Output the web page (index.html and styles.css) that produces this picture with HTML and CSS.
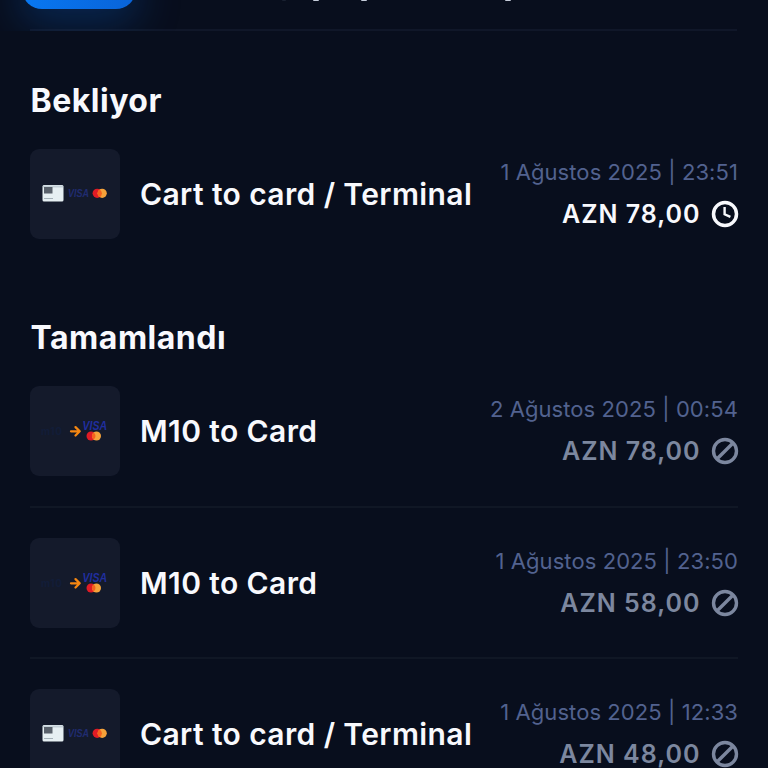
FILE: index.html
```
<!DOCTYPE html>
<html lang="tr">
<head>
<meta charset="utf-8">
<title>İşlemler</title>
<link rel="stylesheet" href="styles.css">
</head>
<body>
<svg width="0" height="0" class="defs" aria-hidden="true">
  <defs>
    <symbol id="terminal" viewBox="0 0 90 90">
      <rect x="12.5" y="36" width="21" height="16.5" rx="1.5" fill="#e6eff2"/>
      <path d="M13 36.5h20v2H13z" fill="#c3d0d7"/>
      <rect x="14" y="38" width="8.5" height="6.5" fill="#59616b"/>
      <path d="M14 49.5h9" stroke="#a4b1b8" stroke-width="1"/>
      <text x="38" y="48" class="visa visa-dim" textLength="21" lengthAdjust="spacingAndGlyphs" font-size="10.5">VISA</text>
      <circle cx="67.2" cy="44.3" r="4.6" fill="#e01b25"/><circle cx="72.2" cy="44.3" r="4.6" fill="#f6a23a"/>
      <path d="M69.7 40.4a4.6 4.6 0 0 1 0 7.8a4.6 4.6 0 0 1 0-7.8z" fill="#f6611e"/>
    </symbol>
    <symbol id="transfer" viewBox="0 0 90 90">
      <text x="11" y="49" class="m10" textLength="21" font-size="10">m10</text>
      <path d="M41 45.3h8M45.5 41.1l4.2 4.2-4.2 4.2" fill="none" stroke="#f58712" stroke-width="2.3" stroke-linecap="round" stroke-linejoin="round"/>
      <text x="52.5" y="44.2" class="visa" textLength="24.5" lengthAdjust="spacingAndGlyphs" font-size="12">VISA</text>
      <circle cx="61" cy="50" r="4.5" fill="#e01b25"/><circle cx="66.5" cy="50" r="4.5" fill="#f6a23a"/>
      <path d="M63.7 46.4a4.5 4.5 0 0 1 0 7.2a4.5 4.5 0 0 1 0-7.2z" fill="#f6611e"/>
    </symbol>
    <symbol id="clock" viewBox="0 0 28 28">
      <circle cx="14" cy="14" r="11.5" fill="none" stroke="currentColor" stroke-width="3.5"/>
      <path d="M13.6 7v7.3l5.8 2.6" fill="none" stroke="currentColor" stroke-width="2.4"/>
    </symbol>
    <symbol id="cancel" viewBox="0 0 28 28">
      <circle cx="14" cy="14" r="11.5" fill="none" stroke="currentColor" stroke-width="3.4"/>
      <path d="M6.2 21.8L21.8 6.2" stroke="currentColor" stroke-width="3.4"/>
    </symbol>
  </defs>
</svg>
<header class="top">
  <div class="pill"></div>
  <i class="tail tail-a"></i><i class="tail tail-b"></i><i class="tail tail-c"></i><i class="tail tail-d"></i>
</header>
<main>
  <section class="pending">
    <h2>Bekliyor</h2>
    <article class="row">
      <svg class="tile"><use href="#terminal"/></svg>
      <h3>Cart to card / Terminal</h3>
      <div class="info"><time>1 Ağustos 2025 | 23:51</time><div class="amount"><span>AZN 78,00</span><svg class="status"><use href="#clock"/></svg></div></div>
    </article>
  </section>
  <section class="done">
    <h2>Tamamlandı</h2>
    <article class="row">
      <svg class="tile"><use href="#transfer"/></svg>
      <h3>M10 to Card</h3>
      <div class="info"><time>2 Ağustos 2025 | 00:54</time><div class="amount"><span>AZN 78,00</span><svg class="status"><use href="#cancel"/></svg></div></div>
    </article>
    <article class="row">
      <svg class="tile"><use href="#transfer"/></svg>
      <h3>M10 to Card</h3>
      <div class="info"><time>1 Ağustos 2025 | 23:50</time><div class="amount"><span>AZN 58,00</span><svg class="status"><use href="#cancel"/></svg></div></div>
    </article>
    <article class="row">
      <svg class="tile"><use href="#terminal"/></svg>
      <h3>Cart to card / Terminal</h3>
      <div class="info"><time>1 Ağustos 2025 | 12:33</time><div class="amount"><span>AZN 48,00</span><svg class="status"><use href="#cancel"/></svg></div></div>
    </article>
  </section>
</main>
</body>
</html>
```
FILE: styles.css
```
* { box-sizing: border-box; }
body { margin: 0; height: 768px; overflow: hidden; background: #080e1d; color: #f8f9fd; font-family: Inter, "Liberation Sans", sans-serif; }
.defs { position: absolute; }
.top { position: relative; height: 31px; overflow: hidden; }
.top::after { content: ""; position: absolute; left: 30px; right: 31px; bottom: 0; height: 2px; background: rgba(60, 75, 105, .16); }
.pill { width: 114px; height: 40px; margin-top: -31px; margin-left: 22px; border-radius: 22px; background: linear-gradient(100deg, #0879f3, #0963d8); box-shadow: 0 10px 40px 4px rgba(8, 91, 190, .34); }
.tail { position: absolute; top: 0; width: 6px; height: 1px; border-radius: 0 0 3px 3px; background: #c5ccda; }
.tail-a { left: 282px; width: 4px; background: #182030; }
.tail-b { left: 313px; }
.tail-c { left: 361px; }
.tail-d { left: 505px; }
main { padding: 0 30px; }
h2, h3 { margin: 0; white-space: nowrap; }
h2 { height: 40px; line-height: 40px; font-size: 32px; font-weight: 700; letter-spacing: .5px; text-indent: .5px; }
.pending { padding-top: 50px; }
.done { padding-top: 79px; }
h2 + .row { margin-top: 28px; }
.row { display: flex; align-items: center; height: 90px; }
.row + .row { position: relative; margin-top: 61.4px; }
.done h2 + .row + .row { margin-top: 61.9px; }
.row + .row::before { content: ""; position: absolute; left: 0; right: 0; top: -32px; height: 2px; background: #101725; }
.tile { flex: none; width: 90px; height: 90px; border-radius: 9px; background: #141a2b; }
h3 { margin-left: 20px; font-size: 30px; line-height: 40px; font-weight: 600; letter-spacing: .39px; }
.info { margin-left: auto; margin-right: -1px; display: flex; flex-direction: column; align-items: flex-end; gap: 10px; white-space: nowrap; }
time { margin-right: 1px; font-size: 22px; line-height: 30px; letter-spacing: .08px; color: #52628f; }
.amount { display: flex; align-items: center; gap: 10.5px; height: 34px; font-size: 25px; font-weight: 600; letter-spacing: 1px; }
.status { width: 28px; height: 28px; }
.done .amount { color: #7c879f; }
.visa { font-family: "Liberation Sans", sans-serif; font-weight: 700; font-style: italic; fill: #202e9e; }
.visa-dim { fill: #202c70; }
.m10 { font-family: Inter, sans-serif; font-weight: 700; fill: #121d38; }
```
